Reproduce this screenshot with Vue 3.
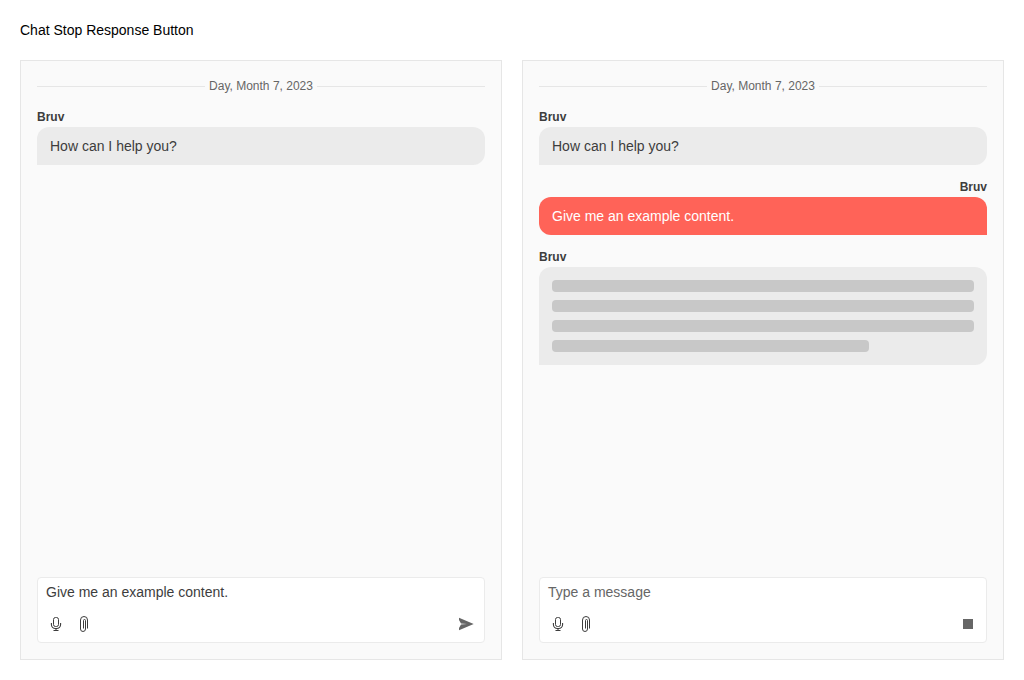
<script setup>
const panels = [
  {
    id: 'idle',
    messages: [{ own: false, text: 'How can I help you?' }],
    draft: 'Give me an example content.',
    busy: false,
  },
  {
    id: 'busy',
    messages: [
      { own: false, text: 'How can I help you?' },
      { own: true, text: 'Give me an example content.' },
      { own: false, loading: true },
    ],
    draft: '',
    busy: true,
  },
]
</script>

<template>
  <main class="page">
    <div class="title">Chat Stop Response Button</div>
    <div class="panels">
      <section v-for="p in panels" :key="p.id" class="chat">
        <div class="timestamp"><span>Day, Month 7, 2023</span></div>
        <div class="list">
          <div v-for="(m, i) in p.messages" :key="i" class="message" :class="{ own: m.own }">
            <div class="author">Bruv</div>
            <div class="bubble" :class="{ loading: m.loading }">
              <template v-if="m.loading">
                <i v-for="n in 4" :key="n" class="bar"></i>
              </template>
              <template v-else>{{ m.text }}</template>
            </div>
          </div>
        </div>
        <div class="prompt">
          <div class="field" :class="{ placeholder: !p.draft }">{{ p.draft || 'Type a message' }}</div>
          <div class="tools">
            <span class="tool">
              <svg viewBox="0 0 16 16" fill="none" stroke="currentColor">
                <rect x="5.5" y="1.5" width="5" height="9" rx="2" />
                <path d="M3.4 7v1.5a4 4 0 0 0 4 4h1.2a4 4 0 0 0 4-4V7M8 12.5v2M5.5 14.5h5" stroke-width="1.1" />
              </svg>
            </span>
            <span class="tool">
              <svg viewBox="0 0 16 16" fill="none" stroke="currentColor">
                <path d="M11.5 12.5V4a3.5 3.5 0 0 0-7 0v9a2.5 2.5 0 0 0 5 0V4.5a1 1 0 0 0-2 0v8" />
              </svg>
            </span>
            <span class="tool action">
              <svg v-if="p.busy" viewBox="0 0 16 16" fill="currentColor"><path d="M3 3h10v10H3z" /></svg>
              <svg v-else viewBox="0 0 16 16" fill="currentColor">
                <path d="M1 1.8 15.7 8 1 14.2V12l2-3.5L9 8 3 7.5 1 4z" />
              </svg>
            </span>
          </div>
        </div>
      </section>
    </div>
  </main>
</template>

<style>
body {
  background: #fff;
}
</style>

<style scoped>
.page {
  box-sizing: border-box;
  height: 680px;
  padding: 20px;
  display: flex;
  flex-direction: column;
  gap: 20px;
  font: 14px/20px "Liberation Sans", Arial, sans-serif;
  color: #000;
}
.panels {
  flex: 1;
  display: grid;
  grid-template-columns: 1fr 1fr;
  gap: 20px;
}
.chat {
  display: flex;
  flex-direction: column;
  padding: 16px;
  border: 1px solid #e6e6e6;
  background: #fafafa;
  color: #3d3d3d;
}
.timestamp {
  display: flex;
  align-items: center;
  gap: 4px;
  font-size: 12px;
  line-height: 18px;
  color: #666;
}
.timestamp::before,
.timestamp::after {
  content: "";
  flex: 1;
  height: 1px;
  background: #e6e6e6;
}
.list {
  flex: 1;
  display: flex;
  flex-direction: column;
  gap: 14px;
  padding-top: 14px;
}
.author {
  font-size: 12px;
  line-height: 16px;
  font-weight: 700;
  margin-bottom: 2px;
}
.bubble {
  padding: 9px 13px;
  border-radius: 12px 12px 12px 0;
  background: #ebebeb;
}
.own .author {
  text-align: right;
}
.own .bubble {
  border-radius: 12px 12px 0 12px;
  background: #ff6358;
  color: #fff;
}
.bubble.loading {
  display: flex;
  flex-direction: column;
  gap: 8px;
  padding: 13px;
}
.bar {
  height: 12px;
  border-radius: 4px;
  background: #c8c8c8;
}
.bar:last-child {
  width: 75%;
}
.prompt {
  box-sizing: border-box;
  height: 66px;
  padding: 4px 4px;
  border: 1px solid #ebebeb;
  border-radius: 4px;
  background: #fff;
}
.field {
  padding: 0 4px;
}
.placeholder {
  color: #666;
}
.tools {
  display: flex;
  margin-top: 8px;
}
.tool {
  display: flex;
  padding: 6px;
}
.tool svg {
  width: 16px;
  height: 16px;
}
.action {
  margin-left: auto;
  color: #666;
}
</style>
